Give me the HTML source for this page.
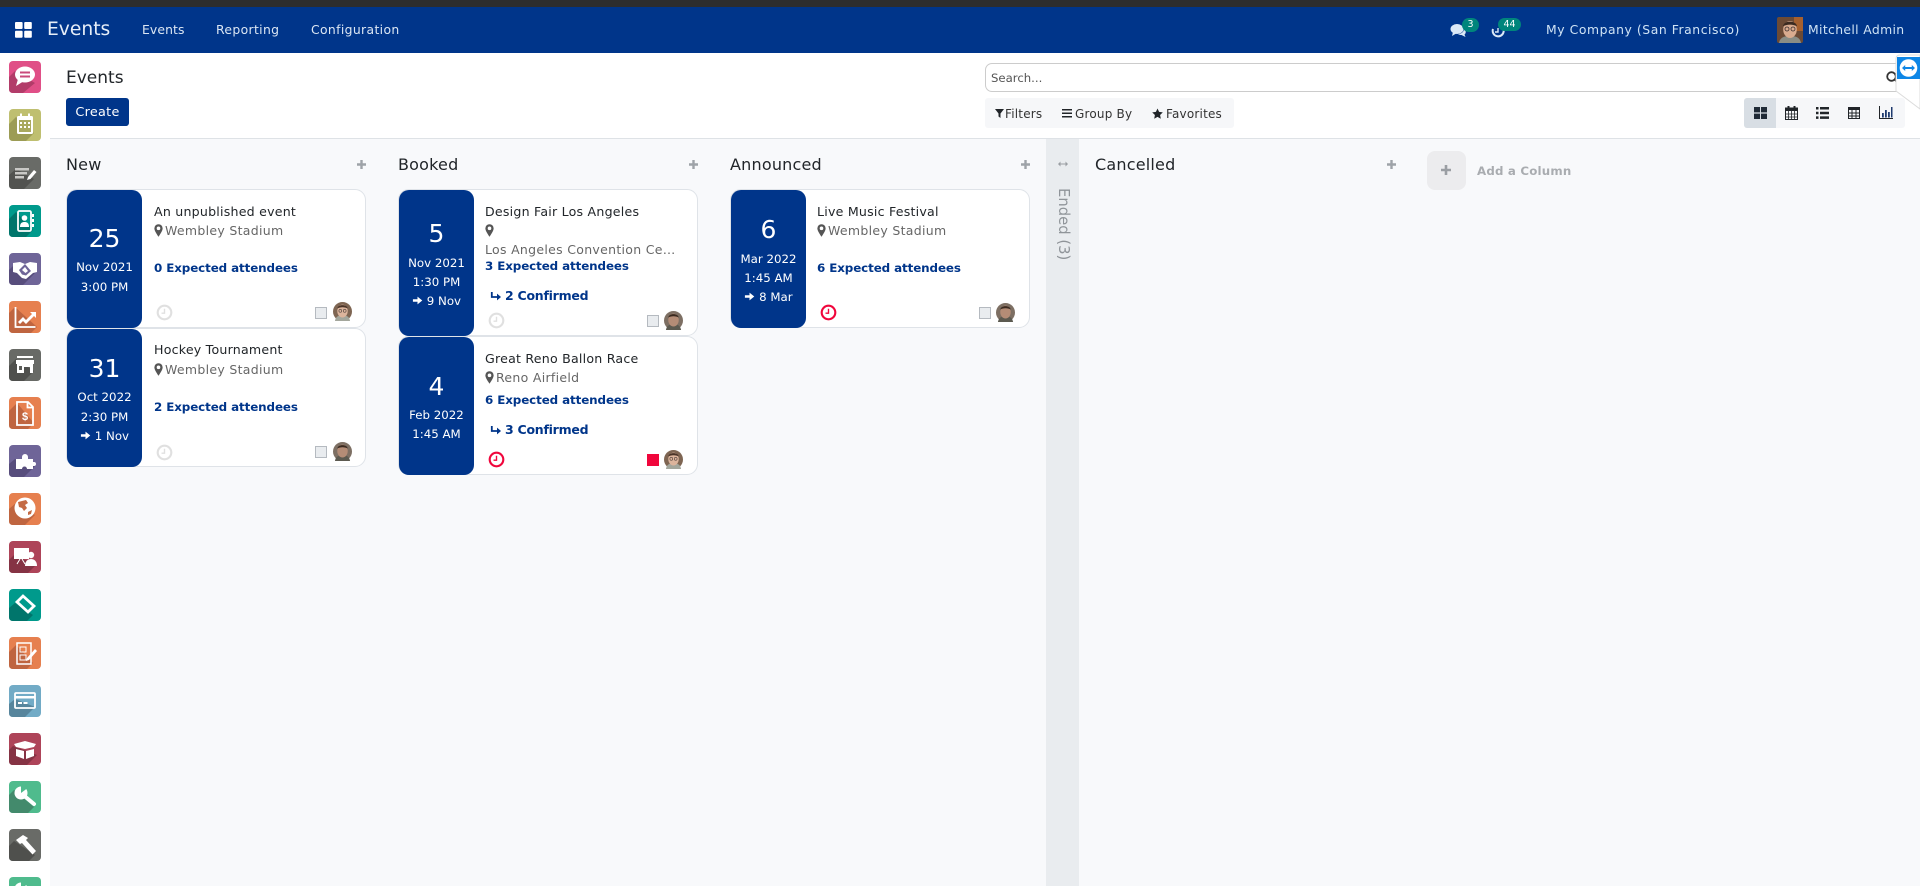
<!DOCTYPE html>
<html lang="en"><head><meta charset="utf-8"><title>Events</title>
<style>
html,body{margin:0;padding:0;width:1920px;height:886px;overflow:hidden;background:#f8f9fb}
body{position:relative;font-family:"DejaVu Sans","Liberation Sans",sans-serif;color:#212529;font-size:12.5px}
.a{position:absolute}
.s{left:9px}
.t{position:absolute;white-space:nowrap;line-height:20px;height:20px}
#top{position:absolute;left:0;top:0;width:1920px;height:7px;background:#2d2d2d}
#nav{position:absolute;left:0;top:7px;width:1920px;height:46px;background:#00358a}
#side{position:absolute;left:0;top:53px;width:50px;height:833px;background:#fff}
#cp{position:absolute;left:50px;top:53px;width:1870px;height:85px;background:#fff;border-bottom:1px solid #dee2e6}
.n{color:#dbe6f3;font-size:12.4px;letter-spacing:.35px}
.card{position:absolute;width:300px;background:#fff;border:1px solid #dfe3e8;border-radius:11px;box-sizing:border-box}
.date{position:absolute;width:75px;background:#00358a;border-radius:10px;color:#fff}
.dc{position:absolute;left:0;width:75px;text-align:center;line-height:20px;font-size:11.8px;white-space:nowrap}
.dn{position:absolute;left:0;width:75px;text-align:center;line-height:30px;font-size:25px;font-weight:normal}
.ti{color:#212529;font-size:12.6px;letter-spacing:.22px}
.lo{color:#666;font-size:12.5px;letter-spacing:.3px}
.ex{color:#00358a;font-weight:bold;font-size:11.9px;letter-spacing:-.1px}
.co{color:#00358a;font-weight:bold;font-size:12.5px;letter-spacing:-.25px}
.h{font-size:16px;color:#212529;letter-spacing:.2px}
.ck{position:absolute;width:12px;height:12px;background:#e9ecef;border:1px solid #b5bac0;box-sizing:border-box}
.fb{font-size:12px;color:#333;letter-spacing:.2px}
</style></head>
<body>
<svg width="0" height="0" style="position:absolute">
<defs>
<symbol id="clk" viewBox="0 0 16 16"><circle cx="8" cy="8" r="6.400" fill="none" stroke="currentColor" stroke-width="2"/><path d="M8 4.500V8.600H5.200" fill="none" stroke="currentColor" stroke-width="1.300"/></symbol>
<symbol id="pin" viewBox="0 0 10 14"><path fill-rule="evenodd" d="M5 0a4.600 4.600 0 0 1 4.600 4.600C9.600 7.400 6.400 11.600 5 14 3.600 11.600.4 7.400.4 4.600A4.600 4.600 0 0 1 5 0zm0 2.600a2 2 0 1 0 0 4 2 2 0 0 0 0-4z" fill="currentColor"/></symbol>
<symbol id="arr" viewBox="0 0 12 12"><path d="M1 4.600H6V1.800L11.200 6 6 10.200V7.400H1z" fill="#fff"/></symbol>
<symbol id="rep" viewBox="0 0 12 12"><path d="M1.800 2V7H7" fill="none" stroke="#00358a" stroke-width="1.800"/><path d="M7 3.600L11 7 7 10.400z" fill="#00358a"/></symbol>
<symbol id="av1" viewBox="0 0 20 20"><circle cx="10" cy="10" r="10" fill="#7e6552"/><path d="M2 20c1-5 4-6 8-6s7 1 8 6z" fill="#a3a69c"/><ellipse cx="10" cy="9.500" rx="5.500" ry="6.800" fill="#dcb49c"/><path d="M4.500 7C5 2 15 2 15.500 7 13 5 7 5 4.500 7z" fill="#4a3428"/><circle cx="7.700" cy="9.300" r="1.500" fill="none" stroke="#4a3d38" stroke-width=".6"/><circle cx="12.300" cy="9.300" r="1.500" fill="none" stroke="#4a3d38" stroke-width=".6"/></symbol>
<symbol id="av2" viewBox="0 0 20 20"><circle cx="10" cy="10" r="10" fill="#7d6f63"/><path d="M2 20c1-5 4-6 8-6s7 1 8 6z" fill="#5c5a50"/><ellipse cx="10" cy="9.500" rx="5.500" ry="6.800" fill="#b48c76"/><path d="M4.500 7C5 2 15 2 15.500 7 13 5 7 5 4.500 7z" fill="#3a2a20"/></symbol>
</defs>
</svg>

<div id="top"></div>
<div id="nav"></div>
<!-- navbar -->
<svg class="a" style="left:15px;top:22px" width="17" height="16" viewBox="0 0 17 16"><rect width="7.600" height="7" rx="1" fill="#fff"/><rect x="9.200" width="7.600" height="7" rx="1" fill="#fff"/><rect y="8.800" width="7.600" height="7" rx="1" fill="#fff"/><rect x="9.200" y="8.800" width="7.600" height="7" rx="1" fill="#fff"/></svg>
<div class="t" style="left:47px;top:20px;font-size:18.700px;color:#e6eef8">Events</div>
<div class="t n" style="left:142px;top:20px;letter-spacing:.1px">Events</div>
<div class="t n" style="left:216px;top:20px">Reporting</div>
<div class="t n" style="left:311px;top:20px">Configuration</div>

<svg class="a" style="left:1450px;top:23px" width="17" height="15" viewBox="0 0 17 15"><ellipse cx="7" cy="6" rx="6.500" ry="5" fill="#dbe9f7"/><path d="M3 9l-1 4 5-3z" fill="#dbe9f7"/><path d="M14 6c2 1.500 2.500 4 .5 5.500l1 2.500-4-2c-1.500 0-2.500-.3-3.500-1 3 0 6-2 6-5z" fill="#dbe9f7"/></svg>
<div class="a" style="left:1462px;top:18px;width:17px;height:14px;border-radius:7px;background:#00857c;color:#fff;font-size:9.500px;line-height:14px;text-align:center">3</div>
<svg class="a" style="left:1491px;top:23px" width="14" height="15" viewBox="0 0 14 15"><path d="M8.500 2.500A5.500 5.500 0 1 1 2 6" fill="none" stroke="#dbe9f7" stroke-width="2"/><path d="M7 5V9H4" fill="none" stroke="#dbe9f7" stroke-width="1.400"/></svg>
<div class="a" style="left:1498px;top:18px;width:23px;height:13px;border-radius:7px;background:#00857c;color:#fff;font-size:9.500px;line-height:13px;text-align:center">44</div>
<div class="t n" style="left:1546px;top:20px;color:#cfe3f5;letter-spacing:.55px">My Company (San Francisco)</div>
<svg class="a" style="left:1777px;top:17px" width="26" height="26" viewBox="0 0 26 26"><rect width="26" height="26" rx="2" fill="#6b4a35"/><rect x="17" width="9" height="14" fill="#a5602f"/><path d="M2 26c1-6 6-7 11-7s10 1 11 7z" fill="#8a8d85"/><ellipse cx="13" cy="12.500" rx="6.800" ry="8.500" fill="#d9ab8f"/><path d="M6 9.500C6.500 3 19.500 3 20 9.500 16.500 7 9.500 7 6 9.500z" fill="#3b2a20"/><circle cx="10" cy="12" r="2" fill="none" stroke="#3a3030" stroke-width=".8"/><circle cx="16" cy="12" r="2" fill="none" stroke="#3a3030" stroke-width=".8"/></svg>
<div class="t n" style="left:1808px;top:20px;color:#cfe3f5">Mitchell Admin</div>

<!-- sidebar -->
<div id="side"></div>
<div id="cp"></div>

<svg style="top:61px" class="a s" width="32" height="32" viewBox="0 0 32 32"><rect width="32" height="32" rx="4" fill="#e04f87"/><path d="M6 10L26 22 14 32H4Q0 32 0 28V16z" fill="#b23c69"/><ellipse cx="16" cy="13.500" rx="10" ry="8" fill="#fff"/><path d="M9 18l-2 7 8-5z" fill="#fff"/><rect x="11" y="10.500" width="10" height="2" fill="#c94a7b"/><rect x="11" y="14.500" width="10" height="2" fill="#c94a7b"/></svg>
<svg style="top:109px" class="a s" width="32" height="32" viewBox="0 0 32 32"><rect width="32" height="32" rx="4" fill="#bfbf70"/><path d="M7 8L25 24 17 32H4Q0 32 0 28V15z" fill="#9c9c55"/><rect x="8" y="7" width="16" height="18" rx="1.500" fill="#fff"/><rect x="11" y="4.500" width="2" height="4" fill="#fff"/><rect x="19" y="4.500" width="2" height="4" fill="#fff"/><rect x="10" y="11" width="12" height="12" fill="#a9a95f"/><path d="M11 13h2v2h-2zm4 0h2v2h-2zm4 0h2v2h-2zm-8 4h2v2h-2zm4 0h2v2h-2zm4 0h2v2h-2z" fill="#fff"/></svg>
<svg style="top:157px" class="a s" width="32" height="32" viewBox="0 0 32 32"><rect width="32" height="32" rx="4" fill="#696b67"/><path d="M7 12L25 22 15 32H4Q0 32 0 28V18z" fill="#525350"/><path d="M6 11h14v2.500H6zm0 4h12v2.500H6zm0 4h9v2.500H6z" fill="#c9c9c6"/><path d="M19 20l6-7 2.500 2-6 7-3.500 1z" fill="#fff"/></svg>
<svg style="top:205px" class="a s" width="32" height="32" viewBox="0 0 32 32"><rect width="32" height="32" rx="4" fill="#009a8c"/><path d="M7 7L24 25 17 32H4Q0 32 0 28V14z" fill="#00756b"/><rect x="9" y="6" width="13" height="20" rx="1.500" fill="none" stroke="#fff" stroke-width="1.800"/><circle cx="15.500" cy="13" r="2.800" fill="#fff"/><path d="M11 22c0-4 2-5 4.500-5s4.500 1 4.500 5z" fill="#fff"/><path d="M23 9h2v3h-2zm0 5h2v3h-2zm0 5h2v3h-2z" fill="#fff"/></svg>
<svg style="top:253px" class="a s" width="32" height="32" viewBox="0 0 32 32"><rect width="32" height="32" rx="4" fill="#6f6598"/><path d="M5 12L26 20 14 32H4Q0 32 0 28V17z" fill="#574d7c"/><path d="M4 10l7-1 5 2 5-2 7 1v9l-4 1-7 6-4-1-5-5-4-1z" fill="#fff"/><path d="M10 17l6-6 6 7-5 4.500-4-1z" fill="#6f6598"/><path d="M13 17l3-3 3 4-2.500 2z" fill="#fff"/></svg>
<svg style="top:301px" class="a s" width="32" height="32" viewBox="0 0 32 32"><rect width="32" height="32" rx="4" fill="#e6804f"/><path d="M6 6L28 26 22 32H4Q0 32 0 28V12z" fill="#bf6540"/><path d="M6.500 6v20h20" fill="none" stroke="#fff" stroke-width="1.800"/><path d="M9 21l5-5 3 3 6-6-2-2h6v6l-2-2-8 8-3-3-3 3z" fill="#fff"/></svg>
<svg style="top:349px" class="a s" width="32" height="32" viewBox="0 0 32 32"><rect width="32" height="32" rx="4" fill="#686a66"/><path d="M7 10L25 22 15 32H4Q0 32 0 28V17z" fill="#4f504d"/><rect x="8" y="7" width="16" height="2" fill="#fff"/><path d="M7 11h18v4H7z" fill="#fff"/><path d="M8 15h16v9h-3v-6H15v6H8z" fill="#fff"/><rect x="10" y="17" width="3" height="4" fill="#5c5d59"/></svg>
<svg style="top:397px" class="a s" width="32" height="32" viewBox="0 0 32 32"><rect width="32" height="32" rx="4" fill="#e6804f"/><path d="M8 6L25 26 19 32H4Q0 32 0 28V14z" fill="#bf6540"/><path d="M8 5h11l5 5v18H8z" fill="none" stroke="#fff" stroke-width="1.800"/><path d="M18.500 5v5.500H24" fill="none" stroke="#fff" stroke-width="1.800"/><text x="16" y="23" font-size="11" font-weight="bold" fill="#fff" text-anchor="middle" font-family="Liberation Sans">$</text></svg>
<svg style="top:445px" class="a s" width="32" height="32" viewBox="0 0 32 32"><rect width="32" height="32" rx="4" fill="#6f6598"/><path d="M6 14L27 20 15 32H4Q0 32 0 28V19z" fill="#574d7c"/><path d="M7 14h6v-2a3 3 0 0 1 6 0v2h5v3h1a2 2 0 0 1 0 4h-1v3H18a2.500 2.500 0 0 0-5 0H7z" fill="#fff"/></svg>
<svg style="top:493px" class="a s" width="32" height="32" viewBox="0 0 32 32"><rect width="32" height="32" rx="4" fill="#e6804f"/><path d="M7 10L26 22 16 32H4Q0 32 0 28V16z" fill="#bf6540"/><circle cx="16" cy="15" r="10.500" fill="#fff"/><path d="M9 9l8-2 2 3-3 2 2 3-3 3-2-3-3-1zM19 19l4-2-1 4-3 1z" fill="#c46a44"/></svg>
<svg style="top:541px" class="a s" width="32" height="32" viewBox="0 0 32 32"><rect width="32" height="32" rx="4" fill="#ae4459"/><path d="M5 14L27 24 19 32H4Q0 32 0 28V19z" fill="#853344"/><rect x="5" y="7" width="15" height="11" fill="#fff"/><path d="M11 18l-3 5M13 18l3 5" stroke="#fff" stroke-width="1"/><circle cx="22" cy="14" r="3.200" fill="#fff"/><path d="M16 25c0-5 3-7 6-7s6 2 6 7z" fill="#fff"/></svg>
<svg style="top:589px" class="a s" width="32" height="32" viewBox="0 0 32 32"><rect width="32" height="32" rx="4" fill="#009a8c"/><path d="M6 14L24 26 18 32H4Q0 32 0 28V19z" fill="#00756b"/><path d="M14 7l11 10-6 6L8 13z" fill="none" stroke="#fff" stroke-width="2.800"/></svg>
<svg style="top:637px" class="a s" width="32" height="32" viewBox="0 0 32 32"><rect width="32" height="32" rx="4" fill="#e6804f"/><path d="M7 8L24 26 18 32H4Q0 32 0 28V15z" fill="#bf6540"/><rect x="8" y="6" width="14" height="21" fill="none" stroke="#fff" stroke-width="1.500"/><rect x="11" y="10" width="6" height="5" fill="none" stroke="#fff"/><rect x="11" y="18" width="6" height="5" fill="none" stroke="#fff"/><path d="M18 21l8-9 2 2-8 9-3 1z" fill="#fff"/></svg>
<svg style="top:685px" class="a s" width="32" height="32" viewBox="0 0 32 32"><rect width="32" height="32" rx="4" fill="#72abc6"/><path d="M6 14L26 22 16 32H4Q0 32 0 28V19z" fill="#57859c"/><rect x="6" y="8" width="20" height="15" rx="1" fill="none" stroke="#fff" stroke-width="1.800"/><rect x="6" y="11" width="20" height="2.500" fill="#fff"/><rect x="9" y="17" width="4" height="2" fill="#fff"/><rect x="14.500" y="17" width="4" height="2" fill="#fff"/></svg>
<svg style="top:733px" class="a s" width="32" height="32" viewBox="0 0 32 32"><rect width="32" height="32" rx="4" fill="#ae4459"/><path d="M4 13L28 22 18 32H4Q0 32 0 28V17z" fill="#853344"/><path d="M5 11l11-3 11 3-2 3-9 2-9-2z" fill="#fff"/><path d="M7 16l8 2v8l-8-3zm18 0l-8 2v8l8-3z" fill="#fff"/></svg>
<svg style="top:781px" class="a s" width="32" height="32" viewBox="0 0 32 32"><rect width="32" height="32" rx="4" fill="#4fbb8d"/><path d="M5 9L25 26 19 32H4Q0 32 0 28V14z" fill="#438a6c"/><path d="M13 13L25 23" stroke="#fff" stroke-width="4" stroke-linecap="round"/><circle cx="12" cy="12" r="6.500" fill="#fff"/><path d="M12 12L20 6 12 3z" fill="#4fbb8d"/></svg>
<svg style="top:829px" class="a s" width="32" height="32" viewBox="0 0 32 32"><rect width="32" height="32" rx="4" fill="#696b67"/><path d="M5 12L26 26 20 32H4Q0 32 0 28V17z" fill="#4f504d"/><path d="M7 11l7-5 5 3-2 2 10 11-3.500 3.500L13 14l-2 1z" fill="#fff"/></svg>
<svg style="top:877px" class="a s" width="32" height="32" viewBox="0 0 32 32"><rect width="32" height="32" rx="4" fill="#4fbb8d"/><path d="M5 9L25 26 19 32H4Q0 32 0 28V14z" fill="#438a6c"/><path d="M13 13L25 23" stroke="#fff" stroke-width="4" stroke-linecap="round"/><circle cx="12" cy="12" r="6.500" fill="#fff"/><path d="M12 12L20 6 12 3z" fill="#4fbb8d"/></svg>

<!-- control panel -->
<div class="t" style="left:66px;top:68px;font-size:17px;color:#212529">Events</div>
<div class="a" style="left:66px;top:98px;width:63px;height:28px;background:#00358a;border-radius:3px;color:#fff;font-size:12.800px;letter-spacing:.3px;line-height:30px;text-align:center">Create</div>

<div class="a" style="left:985px;top:63px;width:919px;height:29px;box-sizing:border-box;border:1px solid #ccc;border-radius:7px;background:#fff"></div>
<div class="t" style="left:991px;top:68px;font-size:11.700px;color:#555">Search...</div>
<svg class="a" style="left:1886px;top:71px" width="12" height="13" viewBox="0 0 12 13"><circle cx="5.500" cy="5.500" r="4.300" fill="none" stroke="#333" stroke-width="1.800"/><path d="M8.500 8.500L12 12" stroke="#333" stroke-width="1.800"/></svg>

<div class="a" style="left:985px;top:98px;width:249px;height:30px;background:#f6f7f9;border-radius:3px"></div>
<svg class="a" style="left:995px;top:109px" width="9" height="9" viewBox="0 0 9 9"><path d="M0 0h9L5.500 4.500V9L3.500 7.500V4.500z" fill="#212529"/></svg>
<div class="t fb" style="left:1005px;top:104px">Filters</div>
<svg class="a" style="left:1062px;top:109px" width="10" height="9" viewBox="0 0 10 9"><path d="M0 0h10v1.500H0zM0 3.500h10V5H0zM0 7h10v1.500H0z" fill="#212529"/></svg>
<div class="t fb" style="left:1075px;top:104px">Group By</div>
<svg class="a" style="left:1152px;top:108px" width="11" height="11" viewBox="0 0 11 11"><path d="M5.500 .5l1.600 3.400 3.700.5-2.700 2.600.7 3.700-3.300-1.800-3.300 1.800.7-3.700L.2 4.400l3.700-.5z" fill="#212529"/></svg>
<div class="t fb" style="left:1166px;top:104px">Favorites</div>

<div class="a" style="left:1744px;top:98px;width:161px;height:30px;background:#f6f7f9;border-radius:3px"></div>
<div class="a" style="left:1744px;top:98px;width:32px;height:30px;background:#d8dee4;border-radius:3px 0 0 3px"></div>
<svg class="a" style="left:1754px;top:107px" width="13" height="12" viewBox="0 0 13 12"><path d="M0 0h6v5.400H0zM7 0h6v5.400H7zM0 6.600h6V12H0zM7 6.600h6V12H7z" fill="#1f2a36"/></svg>
<svg class="a" style="left:1785px;top:106px" width="13" height="14" viewBox="0 0 13 14"><rect x=".5" y="2" width="12" height="11.500" fill="none" stroke="#212529"/><rect y="2" width="13" height="3" fill="#212529"/><path d="M2.500 0h2v3h-2zm6 0h2v3h-2z" fill="#212529"/><path d="M0 8h13M0 11h13M3.500 5v8M6.500 5v8M9.500 5v8" stroke="#212529" stroke-width=".8"/></svg>
<svg class="a" style="left:1816px;top:107px" width="13" height="12" viewBox="0 0 13 12"><path d="M0 0h2.500v2.500H0zM4 0h9v2.500H4zM0 4.700h2.500v2.500H0zM4 4.700h9v2.500H4zM0 9.400h2.500v2.500H0zM4 9.400h9v2.500H4z" fill="#212529"/></svg>
<svg class="a" style="left:1848px;top:107px" width="12" height="12" viewBox="0 0 12 12"><rect x=".5" y=".5" width="11" height="11" fill="none" stroke="#212529"/><rect width="12" height="3" fill="#212529"/><path d="M0 6h12M0 9h12M4 3v9M8 3v9" stroke="#212529"/></svg>
<svg class="a" style="left:1879px;top:106px" width="14" height="13" viewBox="0 0 14 13"><path d="M.5 0v12.500H14" fill="none" stroke="#212529"/><path d="M3 7h1.800v4.500H3zM6 4h1.800v7.500H6zM9 6h1.800v5.500H9zM12 1h1.500v10.500H12z" fill="#1e3a6e"/></svg>

<!-- teamviewer -->
<svg class="a" style="left:1893px;top:53px" width="27" height="58" viewBox="0 0 27 58"><path d="M27 2H7Q3 2 3 6V38L27 56z" fill="#fff" stroke="#dcdcdc"/><rect x="4" y="4" width="23" height="22" fill="#0e86e6"/><circle cx="15.500" cy="15" r="8.800" fill="#fff"/><path d="M9 15l3.200-3v2h6.600v-2L22 15l-3.200 3v-2h-6.600v2z" fill="#0e86e6"/></svg>

<!-- columns -->
<div class="t h" style="left:66px;top:155px">New</div>
<div class="t h" style="left:398px;top:155px">Booked</div>
<div class="t h" style="left:730px;top:155px">Announced</div>
<div class="t h" style="left:1095px;top:155px">Cancelled</div>
<svg class="a" style="left:357px;top:160px" width="9" height="9" viewBox="0 0 9 9"><path d="M3.300 0h2.400v3.300H9v2.400H5.700V9H3.300V5.700H0V3.300h3.300z" fill="#9ea3a8"/></svg>
<svg class="a" style="left:689px;top:160px" width="9" height="9" viewBox="0 0 9 9"><path d="M3.300 0h2.400v3.300H9v2.400H5.700V9H3.300V5.700H0V3.300h3.300z" fill="#9ea3a8"/></svg>
<svg class="a" style="left:1021px;top:160px" width="9" height="9" viewBox="0 0 9 9"><path d="M3.300 0h2.400v3.300H9v2.400H5.700V9H3.300V5.700H0V3.300h3.300z" fill="#9ea3a8"/></svg>
<svg class="a" style="left:1387px;top:160px" width="9" height="9" viewBox="0 0 9 9"><path d="M3.300 0h2.400v3.300H9v2.400H5.700V9H3.300V5.700H0V3.300h3.300z" fill="#9ea3a8"/></svg>

<div class="a" style="left:1046px;top:139px;width:33px;height:747px;background:#e9ecef"></div>
<svg class="a" style="left:1058px;top:161px" width="10" height="6" viewBox="0 0 10 6"><path d="M0 3l2.500-2.500v2h5v-2L10 3 7.500 5.500v-2h-5v2z" fill="#9a9ea3"/></svg>
<div class="a" style="left:1053px;top:188px;width:20px;height:74px;color:#8f9499;font-size:14.800px;line-height:20px;writing-mode:vertical-rl;white-space:nowrap">Ended (3)</div>

<div class="a" style="left:1427px;top:151px;width:39px;height:39px;background:#ececee;border-radius:8px"></div>
<svg class="a" style="left:1441px;top:165px" width="10" height="10" viewBox="0 0 10 10"><path d="M3.700 0h2.600v3.700H10v2.600H6.300V10H3.700V6.300H0V3.700h3.700z" fill="#9a9ea3"/></svg>
<div class="t" style="left:1477px;top:161px;font-size:11.800px;font-weight:bold;color:#a9acb0;letter-spacing:.2px">Add a Column</div>

<!-- New / card 1 -->
<div class="card" style="left:66px;top:189px;height:139px"></div>
<div class="date" style="left:67px;top:190px;height:138px"></div>
<div class="dn" style="left:67px;top:224px;color:#fff">25</div>
<div class="dc" style="left:67px;top:257px;color:#fff">Nov 2021</div>
<div class="dc" style="left:67px;top:277px;color:#fff">3:00 PM</div>
<div class="t ti" style="left:154px;top:202px">An unpublished event</div>
<svg class="a" style="left:154px;top:224px;color:#555" width="9" height="13"><use href="#pin"/></svg>
<div class="t lo" style="left:165px;top:221px">Wembley Stadium</div>
<div class="t ex" style="left:154px;top:258px">0 Expected attendees</div>
<svg class="a" style="left:156px;top:304px;color:#e0e0e0" width="17" height="17"><use href="#clk"/></svg>
<div class="ck" style="left:315px;top:307px"></div>
<svg class="a" style="left:333px;top:302px" width="19" height="19"><use href="#av1"/></svg>

<!-- New / card 2 -->
<div class="card" style="left:66px;top:328px;height:139px"></div>
<div class="date" style="left:67px;top:329px;height:138px"></div>
<div class="dn" style="left:67px;top:354px;color:#fff">31</div>
<div class="dc" style="left:67px;top:387px;color:#fff">Oct 2022</div>
<div class="dc" style="left:67px;top:407px;color:#fff">2:30 PM</div>
<div class="dc" style="left:67px;top:426px;color:#fff"><svg width="11" height="11" style="vertical-align:-1px"><use href="#arr"/></svg> 1 Nov</div>
<div class="t ti" style="left:154px;top:340px">Hockey Tournament</div>
<svg class="a" style="left:154px;top:363px;color:#555" width="9" height="13"><use href="#pin"/></svg>
<div class="t lo" style="left:165px;top:360px">Wembley Stadium</div>
<div class="t ex" style="left:154px;top:397px">2 Expected attendees</div>
<svg class="a" style="left:156px;top:444px;color:#e0e0e0" width="17" height="17"><use href="#clk"/></svg>
<div class="ck" style="left:315px;top:446px"></div>
<svg class="a" style="left:333px;top:442px" width="19" height="19"><use href="#av2"/></svg>

<!-- Booked / card 1 -->
<div class="card" style="left:398px;top:189px;height:147px"></div>
<div class="date" style="left:399px;top:190px;height:146px"></div>
<div class="dn" style="left:399px;top:219px;color:#fff">5</div>
<div class="dc" style="left:399px;top:253px;color:#fff">Nov 2021</div>
<div class="dc" style="left:399px;top:272px;color:#fff">1:30 PM</div>
<div class="dc" style="left:399px;top:291px;color:#fff"><svg width="11" height="11" style="vertical-align:-1px"><use href="#arr"/></svg> 9 Nov</div>
<div class="t ti" style="left:485px;top:202px">Design Fair Los Angeles</div>
<svg class="a" style="left:485px;top:224px;color:#555" width="9" height="13"><use href="#pin"/></svg>
<div class="t lo" style="left:485px;top:240px;width:198px;overflow:hidden;text-overflow:ellipsis">Los Angeles Convention Center</div>
<div class="t ex" style="left:485px;top:256px">3 Expected attendees</div>
<svg class="a" style="left:490px;top:290px" width="12" height="12"><use href="#rep"/></svg>
<div class="t co" style="left:505px;top:286px">2 Confirmed</div>
<svg class="a" style="left:488px;top:312px;color:#e0e0e0" width="17" height="17"><use href="#clk"/></svg>
<div class="ck" style="left:647px;top:315px"></div>
<svg class="a" style="left:664px;top:311px" width="19" height="19"><use href="#av2"/></svg>

<!-- Booked / card 2 -->
<div class="card" style="left:398px;top:336px;height:139px"></div>
<div class="date" style="left:399px;top:337px;height:138px"></div>
<div class="dn" style="left:399px;top:372px;color:#fff">4</div>
<div class="dc" style="left:399px;top:405px;color:#fff">Feb 2022</div>
<div class="dc" style="left:399px;top:424px;color:#fff">1:45 AM</div>
<div class="t ti" style="left:485px;top:349px">Great Reno Ballon Race</div>
<svg class="a" style="left:485px;top:371px;color:#555" width="9" height="13"><use href="#pin"/></svg>
<div class="t lo" style="left:496px;top:368px">Reno Airfield</div>
<div class="t ex" style="left:485px;top:390px">6 Expected attendees</div>
<svg class="a" style="left:490px;top:424px" width="12" height="12"><use href="#rep"/></svg>
<div class="t co" style="left:505px;top:420px">3 Confirmed</div>
<svg class="a" style="left:488px;top:451px;color:#f0063c" width="17" height="17"><use href="#clk"/></svg>
<div class="a" style="left:647px;top:454px;width:12px;height:12px;background:#f0063c"></div>
<svg class="a" style="left:664px;top:450px" width="19" height="19"><use href="#av1"/></svg>

<!-- Announced -->
<div class="card" style="left:730px;top:189px;height:139px"></div>
<div class="date" style="left:731px;top:190px;height:138px"></div>
<div class="dn" style="left:731px;top:215px;color:#fff">6</div>
<div class="dc" style="left:731px;top:249px;color:#fff">Mar 2022</div>
<div class="dc" style="left:731px;top:268px;color:#fff">1:45 AM</div>
<div class="dc" style="left:731px;top:287px;color:#fff"><svg width="11" height="11" style="vertical-align:-1px"><use href="#arr"/></svg> 8 Mar</div>
<div class="t ti" style="left:817px;top:202px">Live Music Festival</div>
<svg class="a" style="left:817px;top:224px;color:#555" width="9" height="13"><use href="#pin"/></svg>
<div class="t lo" style="left:828px;top:221px">Wembley Stadium</div>
<div class="t ex" style="left:817px;top:258px">6 Expected attendees</div>
<svg class="a" style="left:820px;top:304px;color:#f0063c" width="17" height="17"><use href="#clk"/></svg>
<div class="ck" style="left:979px;top:307px"></div>
<svg class="a" style="left:996px;top:303px" width="19" height="19"><use href="#av2"/></svg>
</body></html>
